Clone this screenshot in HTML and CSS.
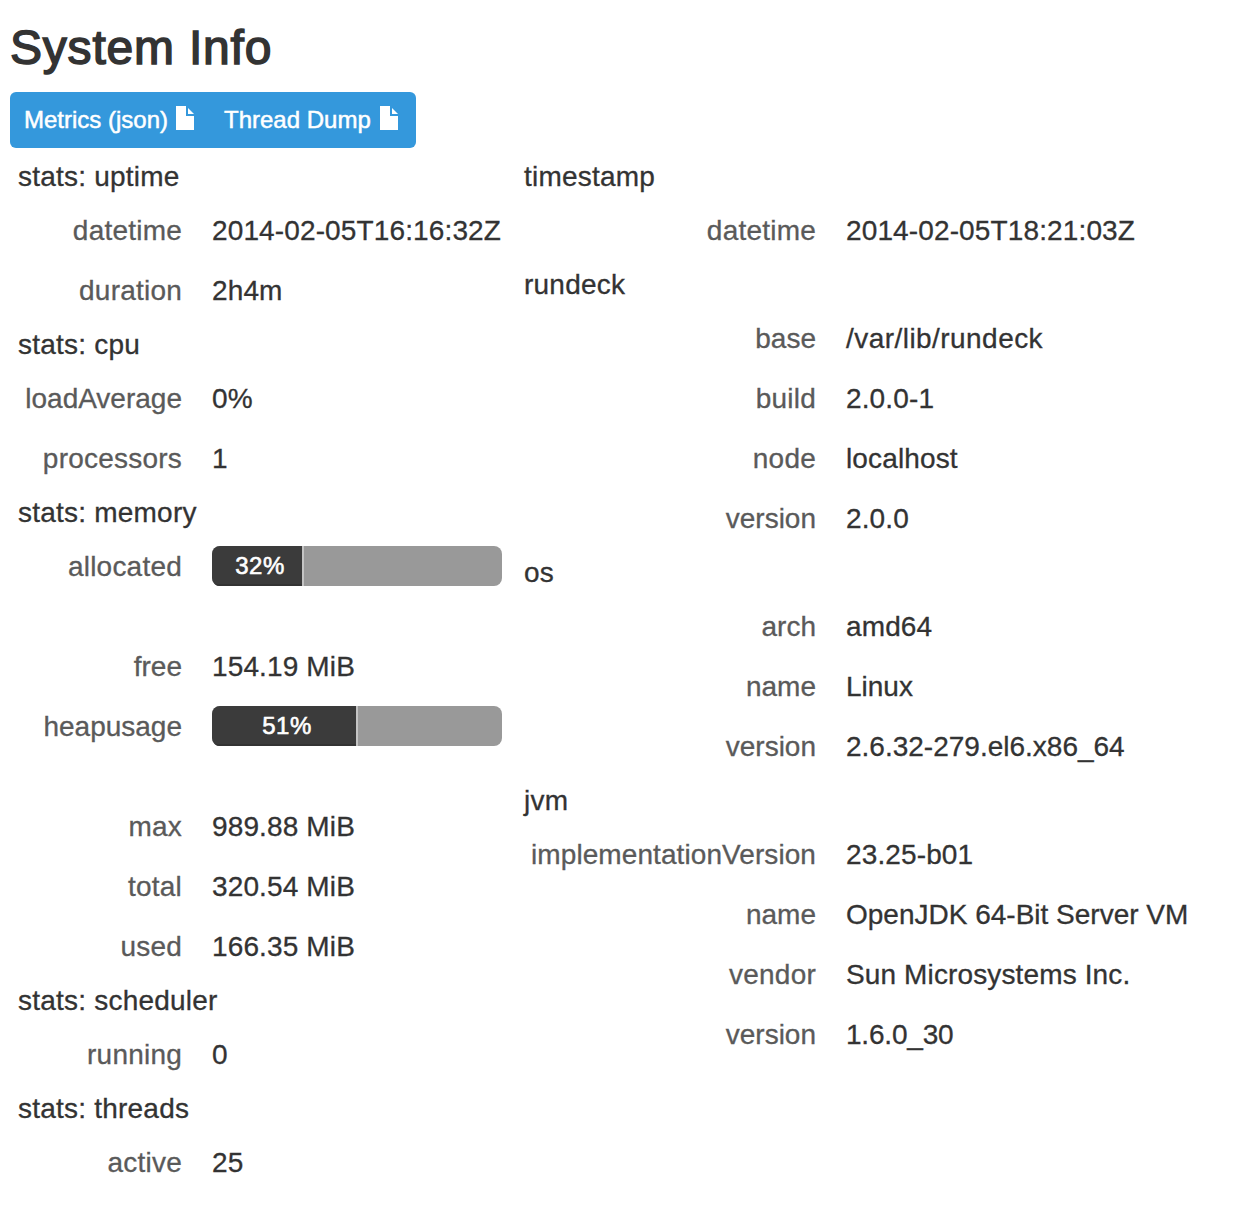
FILE: index.html
```html
<!DOCTYPE html>
<html lang="en">
<head>
<meta charset="utf-8">
<title>System Info</title>
<link rel="stylesheet" href="styles.css">
</head>
<body>
<h1 class="title">System Info</h1>
<nav class="actions">
  <a class="btn"><span class="btn-label metrics">Metrics (json)</span><svg class="file-icon" viewBox="0 0 18 24"><path d="M0 0H10V10H18V24H0Z"/><path d="M12 2V8H18Z"/></svg></a>
  <a class="btn"><span class="btn-label dump">Thread Dump</span><svg class="file-icon" viewBox="0 0 18 24"><path d="M0 0H10V10H18V24H0Z"/><path d="M12 2V8H18Z"/></svg></a>
</nav>
<main class="stats">
  <div class="column column-left">
    <h2>stats: uptime</h2>
    <dl>
      <dt>datetime</dt><dd>2014-02-05T16:16:32Z</dd>
      <dt>duration</dt><dd>2h4m</dd>
    </dl>
    <h2>stats: cpu</h2>
    <dl>
      <dt class="tight">loadAverage</dt><dd>0%</dd>
      <dt>processors</dt><dd>1</dd>
    </dl>
    <h2>stats: memory</h2>
    <dl>
      <dt>allocated</dt><dd class="meter"><div class="progress"><div class="bar" style="width: 92px"><span class="pct">32%</span></div></div></dd>
      <dt class="tight">free</dt><dd>154.19 MiB</dd>
      <dt class="tight">heapusage</dt><dd class="meter"><div class="progress"><div class="bar" style="width: 146px"><span class="pct">51%</span></div></div></dd>
      <dt>max</dt><dd>989.88 MiB</dd>
      <dt>total</dt><dd>320.54 MiB</dd>
      <dt>used</dt><dd>166.35 MiB</dd>
    </dl>
    <h2>stats: scheduler</h2>
    <dl><dt>running</dt><dd>0</dd></dl>
    <h2>stats: threads</h2>
    <dl><dt>active</dt><dd>25</dd></dl>
  </div>
  <div class="column column-right">
    <h2>timestamp</h2>
    <dl><dt>datetime</dt><dd>2014-02-05T18:21:03Z</dd></dl>
    <h2>rundeck</h2>
    <dl>
      <dt class="tight">base</dt><dd class="path">/var/lib/rundeck</dd>
      <dt>build</dt><dd>2.0.0-1</dd>
      <dt>node</dt><dd>localhost</dd>
      <dt class="tight">version</dt><dd>2.0.0</dd>
    </dl>
    <h2>os</h2>
    <dl>
      <dt class="tight">arch</dt><dd>amd64</dd>
      <dt class="tight">name</dt><dd class="tight">Linux</dd>
      <dt class="tight">version</dt><dd class="tight">2.6.32-279.el6.x86_64</dd>
    </dl>
    <h2>jvm</h2>
    <dl>
      <dt class="long">implementationVersion</dt><dd>23.25-b01</dd>
      <dt class="tight">name</dt><dd class="tight">OpenJDK 64-Bit Server VM</dd>
      <dt>vendor</dt><dd>Sun Microsystems Inc.</dd>
      <dt class="tight">version</dt><dd class="release">1.6.0_30</dd>
    </dl>
  </div>
</main>
</body>
</html>
```
FILE: styles.css
```css
* { box-sizing: border-box; }
body {
  margin: 0;
  padding: 20px 10px 0;
  min-height: 1206px;
  background: #fff;
  color: #333;
  font-family: "Liberation Sans", Arial, sans-serif;
  font-size: 28px;
  line-height: 40px;
  -webkit-text-stroke: 0.3px currentColor;
}
.title {
  margin: 0 0 16px;
  font-size: 48px;
  line-height: 56px;
  font-weight: 400;
  letter-spacing: 0.8px;
  -webkit-text-stroke: 1.5px #333;
}
.actions {
  display: flex;
  width: 406px;
  height: 56px;
  margin-bottom: 4px;
  padding-left: 14px;
  gap: 30px;
  border-radius: 6px;
  background: #3498dc;
}
.btn {
  display: flex;
  color: #fff;
  font-size: 24px;
  line-height: 55px;
  white-space: nowrap;
  -webkit-text-stroke: 0.5px #fff;
}
.btn-label { width: 152px; }
.btn-label.dump { width: 156px; }
.file-icon {
  width: 18px;
  height: 24px;
  margin-top: 14px;
  fill: #fff;
  stroke: none;
  flex: none;
}
.stats { display: grid; grid-template-columns: 506px 1fr; }
.column-left { padding-left: 8px; }
.column-right { padding-left: 8px; }
h2 {
  margin: 0;
  font-size: 28px;
  font-weight: 400;
  line-height: 50px;
  height: 48px;
  letter-spacing: 0.22px;
}
dl { display: grid; column-gap: 30px; margin: 0; }
.column-left dl { grid-template-columns: 164px 290px; }
.column-right dl { grid-template-columns: 292px 1fr; }
dt, dd { margin: 0; padding: 11px 0 9px; white-space: nowrap; }
dt { text-align: right; color: #5a5a5a; letter-spacing: 0.22px; }
dd { letter-spacing: 0.13px; }
.tight { letter-spacing: 0; }
.long { letter-spacing: 0.08px; }
.path { letter-spacing: 0.45px; }
.release { letter-spacing: -0.2px; }
.meter { height: 100px; padding-top: 10px; }
.progress {
  height: 40px;
  border-radius: 8px;
  background: #999;
  overflow: hidden;
}
.bar {
  height: 40px;
  background: #3b3b3b;
  border-right: 2px solid #c4c4c4;
  box-shadow: inset 0 -2px 0 #333;
  color: #fff;
  font-size: 24px;
  letter-spacing: 0.5px;
  padding-left: 6px;
  text-align: center;
  -webkit-text-stroke: 0.6px #fff;
}
```
